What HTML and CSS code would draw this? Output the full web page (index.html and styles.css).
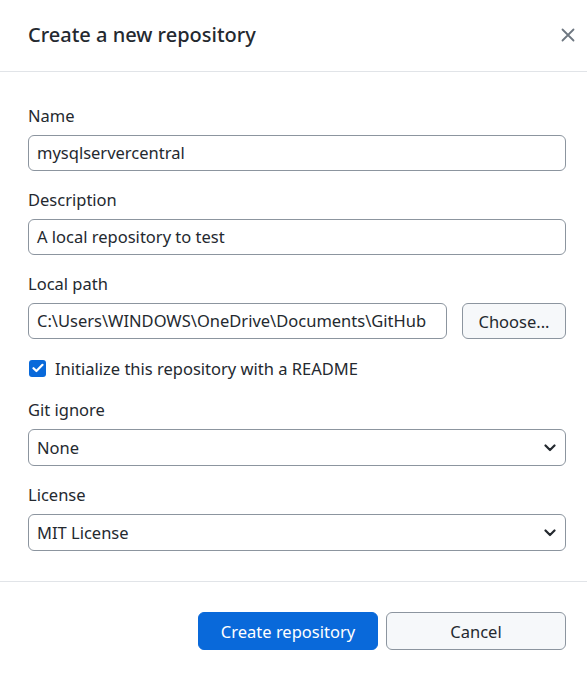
FILE: index.html
```html
<!DOCTYPE html>
<html>
<head>
<meta charset="utf-8">
<link rel="stylesheet" href="styles.css">
</head>
<body>
<div class="dialog">
  <header class="head">
    <h1 class="title">Create a new repository</h1>
    <svg class="close" width="14" height="14" viewBox="0 0 14 14"><path d="M1.5 1.5 L12.5 12.5 M12.5 1.5 L1.5 12.5" stroke="#6e7781" stroke-width="1.8" stroke-linecap="round" fill="none"/></svg>
  </header>
  <main class="body">
    <div class="field">
      <div class="label">Name</div>
      <div class="input">mysqlservercentral</div>
    </div>
    <div class="field">
      <div class="label">Description</div>
      <div class="input">A local repository to test</div>
    </div>
    <div class="field">
      <div class="label">Local path</div>
      <div class="pathrow">
        <div class="input grow">C:\Users\WINDOWS\OneDrive\Documents\GitHub</div>
        <div class="btn choose">Choose...</div>
      </div>
    </div>
    <div class="check">
      <span class="box"><svg width="12" height="10" viewBox="0 0 12 10"><path d="M1.5 5.2 L4.4 8 L10.5 1.8" stroke="#fff" stroke-width="2.2" fill="none" stroke-linecap="round" stroke-linejoin="round"/></svg></span>
      <span>Initialize this repository with a README</span>
    </div>
    <div class="field gi">
      <div class="label">Git ignore</div>
      <div class="input select"><span>None</span><svg width="12" height="8" viewBox="0 0 12 8"><path d="M1.5 1.5 L6 6 L10.5 1.5" stroke="#24292f" stroke-width="2.2" fill="none" stroke-linecap="round" stroke-linejoin="round"/></svg></div>
    </div>
    <div class="field">
      <div class="label">License</div>
      <div class="input select"><span>MIT License</span><svg width="12" height="8" viewBox="0 0 12 8"><path d="M1.5 1.5 L6 6 L10.5 1.5" stroke="#24292f" stroke-width="2.2" fill="none" stroke-linecap="round" stroke-linejoin="round"/></svg></div>
    </div>
  </main>
  <footer class="foot">
    <div class="btn primary">Create repository</div>
    <div class="btn">Cancel</div>
  </footer>
</div>
</body>
</html>
```

FILE: styles.css
```css
* { box-sizing: border-box; }
body {
  margin: 0;
  background: #fff;
  font-family: "Noto Sans", "Open Sans", sans-serif;
  color: #24292f;
}
.head {
  height: 72px;
  border-bottom: 1px solid #e1e4e8;
  display: flex;
  align-items: center;
  justify-content: space-between;
  padding: 0 12px 2px 28px;
}
.title {
  margin: 0;
  font-size: 20px;
  font-weight: 500;
  color: #24292f;
}
.close { margin-top: 1px; }
.body {
  padding: 33px 21px 30px 28px;
  border-bottom: 1px solid #e1e4e8;
}
.field { margin-bottom: 18px; }
.field:last-child { margin-bottom: 0; }
.label {
  font-size: 16.5px;
  line-height: 22px;
  margin-bottom: 8px;
}
.input {
  height: 36px;
  border: 1px solid #8c959f;
  border-radius: 6px;
  padding: 0 8px;
  font-size: 16.5px;
  line-height: 34px;
  white-space: nowrap;
  overflow: hidden;
}
.select {
  height: 37px;
  display: flex;
  align-items: center;
  justify-content: space-between;
  padding-right: 9px;
}
.pathrow {
  display: flex;
  gap: 15px;
}
.grow { flex: 1; }
.btn {
  display: flex;
  align-items: center;
  justify-content: center;
  border: 1px solid #8c959f;
  border-radius: 6px;
  background: #f6f8fa;
  font-size: 16.5px;
  color: #24292f;
}
.choose { width: 104px; height: 36px; }
.check {
  display: flex;
  align-items: center;
  gap: 9px;
  height: 24px;
  margin: -1px 0 19px 1px;
  font-size: 16.5px;
}
.box {
  width: 17px;
  height: 17px;
  border-radius: 3px;
  background: #0969da;
  display: flex;
  align-items: center;
  justify-content: center;
}
.foot {
  display: flex;
  justify-content: flex-end;
  gap: 8px;
  padding: 30px 21px 0 0;
}
.foot .btn { width: 180px; height: 38px; }
.primary {
  background: #0969da;
  border-color: #0969da;
  color: #fff;
}
```
